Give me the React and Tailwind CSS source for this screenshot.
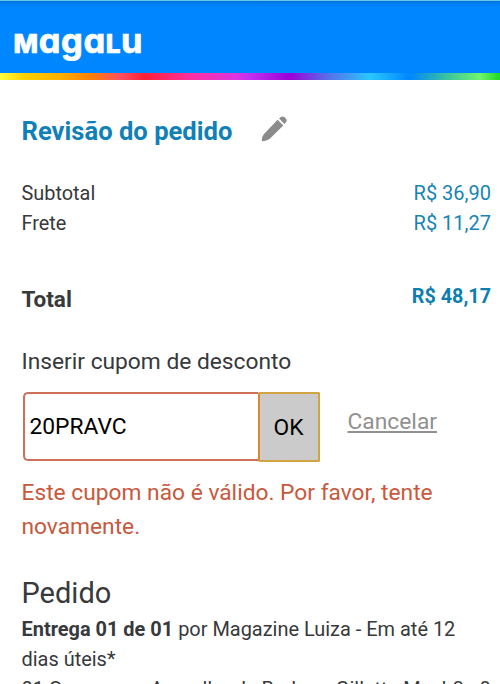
function Logo() {
  return (
    <div className="flex items-baseline font-['Inter',sans-serif] text-[34.5px] leading-[35px] font-bold tracking-[0.6px] text-white [-webkit-text-stroke:0.7px_white] [font-feature-settings:'cv11']">
      <span className="text-[26px] font-extrabold">M</span>
      <span>aga</span>
      <span className="text-[26px] font-extrabold">L</span>
      <span>u</span>
    </div>
  );
}

function EditIcon() {
  return (
    <svg viewBox="0 0 26 26" className="size-[26px] fill-[#8b8b8b]">
      <path d="M16.6 3.7 22.3 9.4 8.8 22.8Q6.6 24.8 2.2 25.2 .7 25.4.8 24 1 20.2 3 17.9Z" />
      <path d="M18.1 2.6 19.8 1.1Q21.6-.2 23.3 1.1L25 2.8Q26.4 4.4 24.9 6.2L23.4 7.9Z" />
    </svg>
  );
}

function PriceRow({ label, value }) {
  return (
    <div className="flex h-[30px] items-center justify-between text-[20px]">
      <span className="pt-px text-[19.9px]">{label}</span>
      <span className="text-[#1684b5]">{value}</span>
    </div>
  );
}

export default function App() {
  return (
    <div className="h-[684px] overflow-hidden bg-white font-['Roboto',sans-serif] text-[#37393b]">
      <header>
        <div className="flex h-[73px] items-start border-t border-[#69c6ea] bg-linear-to-b from-[#0077df] to-[#0086ff] to-8% pt-[22px] pl-[13.5px]">
          <Logo />
        </div>
        <div className="h-[7px] bg-[linear-gradient(90deg,#ffff40_0%,#ffd000_5%,#ffb000_12%,#ff8000_18%,#ff5060_24%,#ff1f35_29%,#ff2fa0_38%,#e035e0_47%,#c030f0_50%,#9b00d8_58%,#5b68e8_65%,#28c8ff_74%,#0086ff_82%,#38c0a0_89%,#6ff66a_96%,#20d820_100%)]" />
      </header>

      <main className="pr-[9px] pl-[21.5px]">
        <div className="flex h-[69px] items-end gap-[29px]">
          <h1 className="text-[25.6px] leading-[36px] font-bold text-[#1080b8]">Revisão do pedido</h1>
          <div className="pb-[7px]">
            <EditIcon />
          </div>
        </div>

        <div className="pt-[29px]">
          <PriceRow label="Subtotal" value="R$ 36,90" />
          <PriceRow label="Frete" value="R$ 11,27" />
        </div>

        <div className="flex h-[76px] items-end justify-between leading-[30px] font-bold">
          <span className="text-[22.5px]">Total</span>
          <span className="pb-[2px] text-[19.8px] text-[#0d7fae]">R$ 48,17</span>
        </div>

        {/* Coupon form */}
        <p className="pt-[31px] text-[22.75px] leading-[34px]">Inserir cupom de desconto</p>
        <div className="flex pt-[13px] pl-px">
          <div className="flex h-[69px] w-[235px] items-center rounded-l-[5px] border-2 border-r-0 border-[#cf705a] pt-0.5 pl-[5px] text-[22.8px] text-black">
            20PRAVC
          </div>
          <button className="h-[70px] w-[62px] rounded-[2px] border-2 border-[#d0a440] border-l-[#dc8a28] bg-[#cbcbcb] pt-0.5 text-[22.8px] text-black">
            OK
          </button>
          <a href="#" className="ml-7 pt-[13px] text-[22.8px] leading-[34px] text-[#919191] underline">Cancelar</a>
        </div>
        <p className="pt-[14px] text-[22.75px] leading-[34px] text-[#c9583c]">
          Este cupom não é válido. Por favor, tente
          <br />
          novamente.
        </p>

        {/* Order */}
        <h2 className="pt-[31px] text-[29px] leading-[36px]">Pedido</h2>
        <p className="pt-[3px] text-[19.95px] leading-[30px] whitespace-nowrap">
          <b>Entrega 01 de 01</b> por Magazine Luiza - Em até 12
          <br />
          dias úteis*
          <br />
          01 Carga para Aparelho de Barbear Gillette Mach3 - 8
        </p>
      </main>
    </div>
  );
}
